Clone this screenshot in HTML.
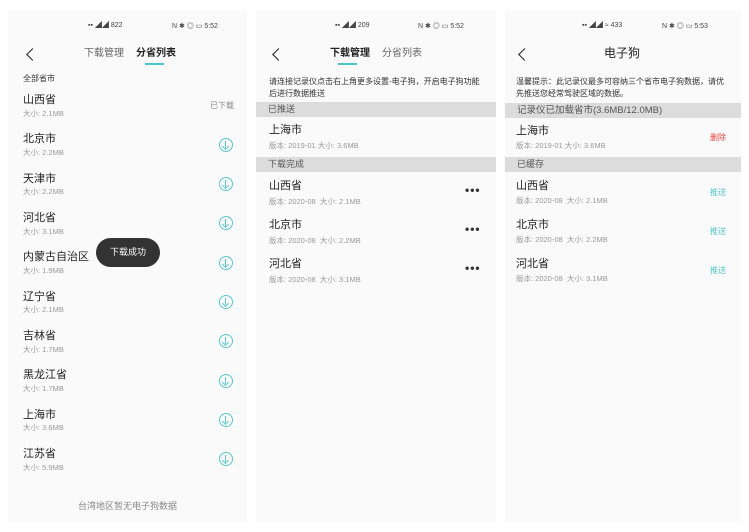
<!DOCTYPE html><html><head><meta charset="utf-8"><style>
*{margin:0;padding:0;box-sizing:border-box}
body{width:749px;height:532px;background:#fff;position:relative;overflow:hidden;font-family:"Liberation Sans","Noto Sans CJK SC",sans-serif;color:#222}
.p{position:absolute;top:10px;height:512px;background:#fafafa}
.a{position:absolute;white-space:nowrap;line-height:1}
.n{font-size:11px;color:#222}
.s{font-size:7.5px;color:#999}
.bar{position:absolute;height:15px;background:#dcdcdc;font-size:9px;color:#555;line-height:15px;padding-left:12px}
.sb{font-size:7px;color:#444}
.ic{position:absolute;width:14px;height:14px;border:1.3px solid #5cc6cc;border-radius:50%}
.ic:before{content:"";position:absolute;left:5px;top:2px;width:1.3px;height:7px;background:#5cc6cc}
.ic:after{content:"";position:absolute;left:3.3px;top:4.5px;width:4px;height:4px;border-right:1.3px solid #5cc6cc;border-bottom:1.3px solid #5cc6cc;transform:rotate(45deg)}
.dots{position:absolute;font-size:12px;font-weight:bold;letter-spacing:1px;color:#333}
.back{position:absolute;width:9px;height:9px;border-left:1.6px solid #222;border-bottom:1.6px solid #222;transform:rotate(45deg)}
</style></head><body>
<div class="p" style="left:8px;width:239px"></div>
<div class="p" style="left:256px;width:240px"></div>
<div class="p" style="left:505px;width:236px"></div>

<!-- status bars -->
<div class="a sb" style="left:88px;top:22px">▪▪ ◢◢ 822</div><div class="a sb" style="left:172px;top:23px">N ✱ ◎ ▭ 5:52</div>
<div class="a sb" style="left:335px;top:22px">▪▪ ◢◢ 209</div><div class="a sb" style="left:418px;top:23px">N ✱ ◎ ▭ 5:52</div>
<div class="a sb" style="left:582px;top:22px">▪▪ ◢◢ ≈ 433</div><div class="a sb" style="left:662px;top:23px">N ✱ ◎ ▭ 5:53</div>

<!-- Panel 1 -->
<div class="back" style="left:28px;top:50px"></div>
<div class="a" style="left:84px;top:49px;font-size:10px;color:#666">下载管理</div>
<div class="a" style="left:136px;top:49px;font-size:10px;font-weight:bold;color:#222">分省列表</div>
<div style="position:absolute;left:145px;top:63px;width:19px;height:2px;background:#4cc4c9"></div>
<div class="a" style="left:23px;top:75px;font-size:8px;color:#333">全部省市</div>
<div class="a n" style="left:23px;top:95px">山西省</div><div class="a s" style="left:23px;top:110px">大小: 2.1MB</div>
<div class="a" style="left:210px;top:102px;font-size:8px;color:#888">已下载</div>
<div class="a n" style="left:23px;top:134px">北京市</div><div class="a s" style="left:23px;top:149px">大小: 2.2MB</div><div class="ic" style="left:219px;top:138px"></div>
<div class="a n" style="left:23px;top:174px">天津市</div><div class="a s" style="left:23px;top:188px">大小: 2.2MB</div><div class="ic" style="left:219px;top:177px"></div>
<div class="a n" style="left:23px;top:213px">河北省</div><div class="a s" style="left:23px;top:228px">大小: 3.1MB</div><div class="ic" style="left:219px;top:216px"></div>
<div class="a n" style="left:23px;top:252px">内蒙古自治区</div><div class="a s" style="left:23px;top:267px">大小: 1.9MB</div><div class="ic" style="left:219px;top:256px"></div>
<div class="a n" style="left:23px;top:292px">辽宁省</div><div class="a s" style="left:23px;top:306px">大小: 2.1MB</div><div class="ic" style="left:219px;top:295px"></div>
<div class="a n" style="left:23px;top:331px">吉林省</div><div class="a s" style="left:23px;top:346px">大小: 1.7MB</div><div class="ic" style="left:219px;top:334px"></div>
<div class="a n" style="left:23px;top:370px">黑龙江省</div><div class="a s" style="left:23px;top:385px">大小: 1.7MB</div><div class="ic" style="left:219px;top:374px"></div>
<div class="a n" style="left:23px;top:410px">上海市</div><div class="a s" style="left:23px;top:424px">大小: 3.6MB</div><div class="ic" style="left:219px;top:413px"></div>
<div class="a n" style="left:23px;top:449px">江苏省</div><div class="a s" style="left:23px;top:464px">大小: 5.9MB</div><div class="ic" style="left:219px;top:452px"></div>
<div class="a" style="left:78px;top:502px;font-size:9px;color:#888">台湾地区暂无电子狗数据</div>
<div style="position:absolute;left:96px;top:238px;width:64px;height:29px;border-radius:15px;background:#333;color:#fff;font-size:9px;line-height:29px;text-align:center">下载成功</div>

<!-- Panel 2 -->
<div class="back" style="left:274px;top:50px"></div>
<div class="a" style="left:330px;top:49px;font-size:10px;font-weight:bold;color:#222">下载管理</div>
<div class="a" style="left:382px;top:49px;font-size:10px;color:#666">分省列表</div>
<div style="position:absolute;left:338px;top:63px;width:19px;height:2px;background:#4cc4c9"></div>
<div class="a" style="left:269px;top:76px;font-size:8px;color:#333;line-height:12px">请连接记录仪点击右上角更多设置-电子狗，开启电子狗功能<br>后进行数据推送</div>
<div class="bar" style="left:256px;top:102px;width:240px">已推送</div>
<div class="a n" style="left:269px;top:125px">上海市</div><div class="a s" style="left:269px;top:142px">版本: 2019-01 大小: 3.6MB</div>
<div class="bar" style="left:256px;top:157px;width:240px">下载完成</div>
<div class="a n" style="left:269px;top:181px">山西省</div><div class="a s" style="left:269px;top:198px">版本: 2020-08&nbsp; 大小: 2.1MB</div><div class="dots" style="left:465px;top:183px">•••</div>
<div class="a n" style="left:269px;top:220px">北京市</div><div class="a s" style="left:269px;top:237px">版本: 2020-08&nbsp; 大小: 2.2MB</div><div class="dots" style="left:465px;top:222px">•••</div>
<div class="a n" style="left:269px;top:259px">河北省</div><div class="a s" style="left:269px;top:276px">版本: 2020-08&nbsp; 大小: 3.1MB</div><div class="dots" style="left:465px;top:261px">•••</div>

<!-- Panel 3 -->
<div class="back" style="left:520px;top:50px"></div>
<div class="a" style="left:604px;top:47px;font-size:12px;color:#222">电子狗</div>
<div class="a" style="left:516px;top:76px;font-size:8px;color:#333;line-height:12px">温馨提示：此记录仪最多可容纳三个省市电子狗数据，请优<br>先推送您经常驾驶区域的数据。</div>
<div class="bar" style="left:505px;top:103px;width:236px;font-size:9.5px">记录仪已加载省市(3.6MB/12.0MB)</div>
<div class="a n" style="left:516px;top:126px">上海市</div><div class="a s" style="left:516px;top:142px">版本: 2019-01 大小: 3.6MB</div>
<div class="a" style="left:710px;top:134px;font-size:8px;color:#e8453c">删除</div>
<div class="bar" style="left:505px;top:157px;width:236px">已缓存</div>
<div class="a n" style="left:516px;top:181px">山西省</div><div class="a s" style="left:516px;top:197px">版本: 2020-08&nbsp; 大小: 2.1MB</div><div class="a" style="left:710px;top:189px;font-size:8px;color:#4cc4c9">推送</div>
<div class="a n" style="left:516px;top:220px">北京市</div><div class="a s" style="left:516px;top:236px">版本: 2020-08&nbsp; 大小: 2.2MB</div><div class="a" style="left:710px;top:228px;font-size:8px;color:#4cc4c9">推送</div>
<div class="a n" style="left:516px;top:259px">河北省</div><div class="a s" style="left:516px;top:275px">版本: 2020-08&nbsp; 大小: 3.1MB</div><div class="a" style="left:710px;top:267px;font-size:8px;color:#4cc4c9">推送</div>
</body></html>
